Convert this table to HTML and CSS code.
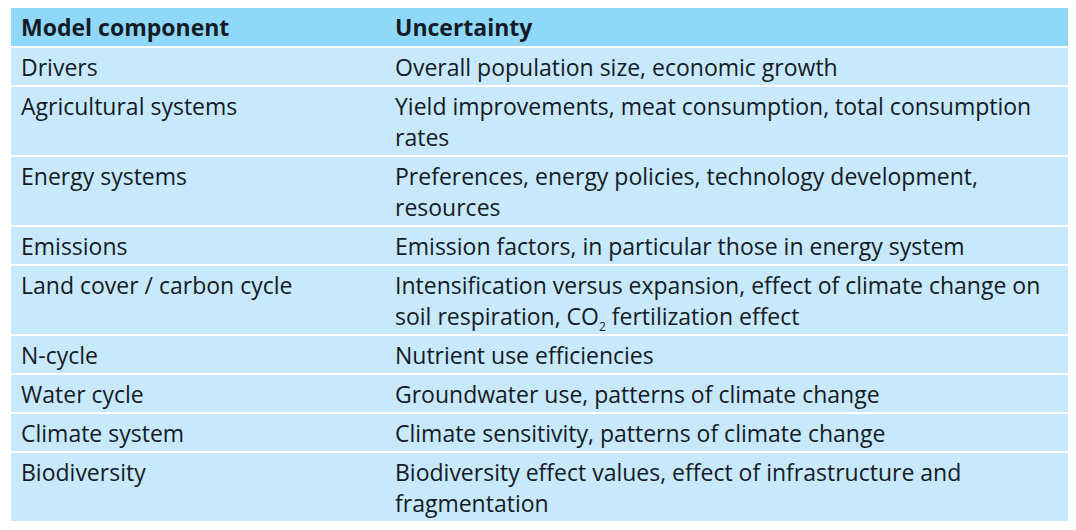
FILE: index.html
```html
<!DOCTYPE html>
<html lang="en">
<head>
<meta charset="utf-8">
<title>Model uncertainties</title>
<link rel="stylesheet" href="styles.css">
</head>
<body>
<table class="uncert">
  <thead>
    <tr><th class="c1">Model component</th><th class="c2">Uncertainty</th></tr>
  </thead>
  <tbody>
    <tr><td>Drivers</td><td>Overall population size, economic growth</td></tr>
    <tr><td>Agricultural systems</td><td>Yield improvements, meat consumption, total consumption rates</td></tr>
    <tr><td>Energy systems</td><td>Preferences, energy policies, technology development, resources</td></tr>
    <tr><td>Emissions</td><td>Emission factors, in particular those in energy system</td></tr>
    <tr><td>Land cover / carbon cycle</td><td>Intensification versus expansion, effect of climate change on soil respiration, CO<sub>2</sub> fertilization effect</td></tr>
    <tr><td>N-cycle</td><td>Nutrient use efficiencies</td></tr>
    <tr><td>Water cycle</td><td>Groundwater use, patterns of climate change</td></tr>
    <tr><td>Climate system</td><td>Climate sensitivity, patterns of climate change</td></tr>
    <tr><td>Biodiversity</td><td>Biodiversity effect values, effect of infrastructure and fragmentation</td></tr>
  </tbody>
</table>
</body>
</html>
```
FILE: styles.css
```css
html, body {
  margin: 0;
  padding: 0;
  background: #ffffff;
}
body {
  padding: 8px 8px 0 11px;
  font-family: "Open Sans", "Noto Sans", sans-serif;
  color: #141b26;
}
.uncert {
  width: 1057px;
  border-collapse: collapse;
  table-layout: fixed;
  font-size: 23px;
  line-height: 31px;
}
.uncert th,
.uncert td {
  text-align: left;
  vertical-align: top;
  padding: 4px 10px 2px;
}
.uncert th {
  background: #8fd8f8;
  font-weight: 700;
  padding-top: 4px;
  padding-bottom: 3px;
}
.uncert td {
  background: #c7e9fb;
  border-top: 2px solid #ffffff;
}
.uncert .c1 {
  width: 354px;
}
.uncert sub {
  font-size: 12px;
  line-height: 0;
  vertical-align: -6px;
}
```
